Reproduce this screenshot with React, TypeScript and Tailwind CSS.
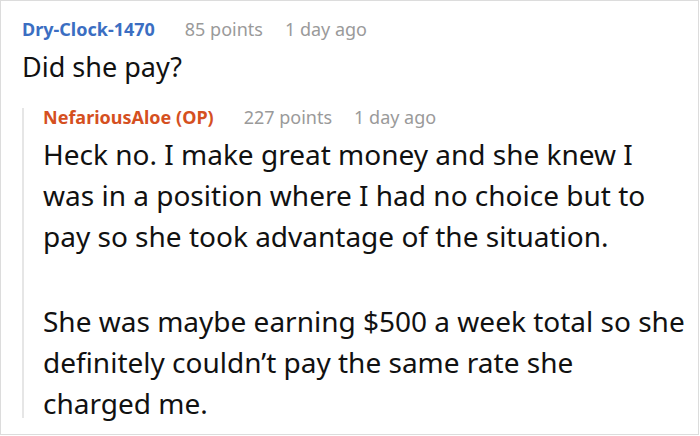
const font = { fontFamily: '"Noto Sans", "Open Sans", sans-serif' };

type MetaProps = { name: string; nameColor: string; points: string; time: string };

const Meta = ({ name, nameColor, points, time }: MetaProps) => (
  <div className="flex items-baseline text-[18px] leading-none">
    <span className={`font-bold ${nameColor}`}>{name}</span>
    <span className="ml-[30px] text-[#9a9a9a]">{points}</span>
    <span className="ml-[22px] text-[#9a9a9a]">{time}</span>
  </div>
);

export default function App() {
  return (
    <div className="w-[700px] h-[436px] bg-white" style={font}>
      <div className="w-[699px] h-[435px] border border-[#dcdcdc] pl-[21px] pt-[19px]">
        <Meta name="Dry-Clock-1470" nameColor="text-[#3b6ec2]" points="85 points" time="1 day ago" />
        <p className="mt-[15px] text-[27px] leading-none text-[#111]">Did she pay?</p>
        <div className="mt-[28px] border-l-2 border-[#e6e6e6] pl-[19px] h-[310px]">
          <Meta name="NefariousAloe (OP)" nameColor="text-[#d5501f]" points="227 points" time="1 day ago" />
          <div className="mt-[8px] w-[643px] text-[28px] leading-[41px] text-[#111]">
            <p>
              Heck no. I make great money and she knew I was in a position where I had no choice but to pay so
              she took advantage of the situation.
            </p>
            <p className="mt-[44px]">
              She was maybe earning $500 a week total so she definitely couldn’t pay the same rate she charged me.
            </p>
          </div>
        </div>
      </div>
    </div>
  );
}
